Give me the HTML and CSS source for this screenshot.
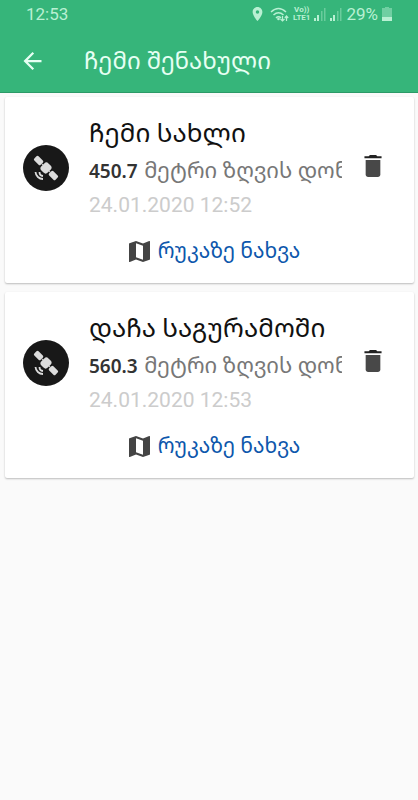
FILE: index.html
```html
<!DOCTYPE html>
<html lang="ka">
<head>
    <meta charset="UTF-8">
    <meta name="viewport" content="width=device-width, initial-scale=1.0">
    <title>ჩემი შენახული</title>
    <link rel="stylesheet" href="styles.css">
</head>
<body>
    <svg class="sprite" aria-hidden="true">
        <symbol id="satellite" viewBox="0 0 46 46">
            <circle cx="23" cy="23" r="23" fill="#181818"/>
            <g fill="#dcdcdc" transform="rotate(45 23 23)">
                <rect x="8" y="20" width="9" height="6" rx="1.500"/>
                <rect x="17" y="22.500" width="12" height="1"/>
                <rect x="18.500" y="18" width="9" height="10" rx="3"/>
                <rect x="29" y="20" width="9" height="6" rx="1.500"/>
            </g>
            <g fill="none" stroke="#dcdcdc" stroke-width="1.800">
                <path d="M16.500 27a4 4 0 0 0 3.500 4"/>
                <path d="M12.500 27a7.500 7.500 0 0 0 7.500 7"/>
            </g>
        </symbol>
        <symbol id="trash" viewBox="5 3 14 18">
            <path fill="#484848" d="M6 19c0 1.100.9 2 2 2h8c1.100 0 2-.9 2-2V7H6z"/>
            <path fill="#222" d="M19 4h-3.500l-1-1h-5l-1 1H5v1.600h14z"/>
        </symbol>
        <symbol id="map" viewBox="3 3 18 18">
            <path fill="#444" d="M20.500 3l-.16.03L15 5.100 9 3 3.360 4.900c-.21.070-.36.250-.36.480V20.500c0 .28.220.5.500.5l.16-.03L9 18.900l6 2.100 5.640-1.900c.21-.07.360-.25.360-.48V3.500c0-.28-.22-.5-.5-.5zM15 19l-6-2.110V5l6 2.110V19z"/>
        </symbol>
    </svg>

    <header class="header">
        <div class="status">
            <span class="clock">12:53</span>
            <div class="status-icons">
                <svg class="pin" viewBox="5 2 14 20" aria-hidden="true"><path fill="currentColor" d="M12 2C8.130 2 5 5.130 5 9c0 5.250 7 13 7 13s7-7.750 7-13c0-3.870-3.130-7-7-7zm0 9.500a2.500 2.500 0 0 1 0-5 2.500 2.500 0 0 1 0 5z"/></svg>
                <svg class="wifi" viewBox="0 0 19 15" aria-hidden="true">
                    <g fill="none" stroke="currentColor" stroke-width="1.500">
                        <path d="M1 5q7.500-7 15 0M3.500 8q5-4.500 10 0M6 11q2.500-2.500 5 0"/>
                        <path stroke-width="1.200" d="M12.500 9v5M10.500 12l2 2 2-2M16.500 14V9M14.800 11l1.700-2 1.700 2"/>
                    </g>
                    <circle cx="8.500" cy="12" r="1.300" fill="currentColor"/>
                </svg>
                <span class="lte">Vo))<br>LTE1</span>
                <svg class="signal" viewBox="0 0 12 13" aria-hidden="true"><path fill="currentColor" d="M0 10h2v3H0zM3 7h2v6H3z"/><path fill="currentColor" opacity=".4" d="M7 3h1.500v10H7zM10 0h1.500v13H10z"/></svg>
                <svg class="signal" viewBox="0 0 12 13" aria-hidden="true"><path fill="currentColor" d="M0 10h2v3H0zM3 7h2v6H3z"/><path fill="currentColor" opacity=".4" d="M7 3h1.500v10H7zM10 0h1.500v13H10z"/></svg>
                <span class="percent">29%</span>
                <svg class="battery" viewBox="0 0 10 14" aria-hidden="true"><path fill="currentColor" opacity=".45" d="M3 0h4v1h3v9H0V1h3z"/><path fill="currentColor" d="M0 10h10v4H0z"/></svg>
            </div>
        </div>
        <div class="bar">
            <button class="icon-button" aria-label="უკან">
                <svg class="back" viewBox="4 4 16 16"><path fill="currentColor" d="M20 11H7.830l5.590-5.590L12 4l-8 8 8 8 1.410-1.410L7.830 13H20z"/></svg>
            </button>
            <h1 class="title">ჩემი შენახული</h1>
        </div>
    </header>

    <main class="list">
        <article class="card">
            <div class="row">
                <svg class="avatar" aria-hidden="true"><use href="#satellite"/></svg>
                <div class="info">
                    <h2 class="name">ჩემი სახლი</h2>
                    <p class="height"><b>450.7</b> მეტრი ზღვის დონ</p>
                    <p class="date">24.01.2020 12:52</p>
                </div>
                <button class="icon-button delete" aria-label="წაშლა"><svg class="trash"><use href="#trash"/></svg></button>
            </div>
            <a class="map-link" href="#"><svg class="map" aria-hidden="true"><use href="#map"/></svg>რუკაზე ნახვა</a>
        </article>
        <article class="card">
            <div class="row">
                <svg class="avatar" aria-hidden="true"><use href="#satellite"/></svg>
                <div class="info">
                    <h2 class="name">დაჩა საგურამოში</h2>
                    <p class="height"><b>560.3</b> მეტრი ზღვის დონ</p>
                    <p class="date">24.01.2020 12:53</p>
                </div>
                <button class="icon-button delete" aria-label="წაშლა"><svg class="trash"><use href="#trash"/></svg></button>
            </div>
            <a class="map-link" href="#"><svg class="map" aria-hidden="true"><use href="#map"/></svg>რუკაზე ნახვა</a>
        </article>
    </main>
</body>
</html>
```

FILE: styles.css
```css
* {
    box-sizing: border-box;
}
body {
    margin: 0;
    background-color: #fafafa;
    font-family: Roboto, "Noto Sans Georgian", "Noto Sans", "DejaVu Sans", sans-serif;
}
h1, h2, p {
    margin: 0;
    font-weight: normal;
}
svg {
    display: block;
    flex-shrink: 0;
}
.sprite {
    position: absolute;
    width: 0;
    height: 0;
}
.header {
    background-color: #36b57a;
    border-bottom: 1px solid #2b9a67;
    color: #e6fff3;
}
.status {
    display: flex;
    justify-content: space-between;
    align-items: center;
    height: 28px;
    padding: 0 26px;
    color: #b9f0d3;
}
.clock, .percent {
    font-size: 17px;
}
.status-icons {
    display: flex;
    align-items: center;
    gap: 4px;
}
.pin {
    width: 11px;
    height: 14px;
    margin-right: 3px;
}
.wifi {
    width: 19px;
    height: 15px;
}
.lte {
    font-size: 8px;
    font-weight: bold;
    line-height: 8px;
    text-align: center;
}
.signal {
    width: 12px;
    height: 13px;
}
.battery {
    width: 10px;
    height: 14px;
}
.bar {
    display: flex;
    align-items: center;
    gap: 42px;
    height: 64px;
    padding: 2px 23px 0;
}
.icon-button {
    padding: 0;
    border: none;
    background-color: transparent;
    color: inherit;
    cursor: pointer;
}
.back {
    width: 19px;
    height: 18px;
}
.title {
    font-size: 24px;
    line-height: 32px;
}
.list {
    display: flex;
    flex-direction: column;
    gap: 9px;
    padding: 4px 4px 4px 5px;
}
.card {
    padding: 16px 32px 16px 18px;
    background-color: white;
    border-radius: 2px;
    box-shadow: 0 1px 2px rgba(0, 0, 0, .25);
}
.row {
    display: flex;
    align-items: center;
    gap: 20px;
}
.avatar {
    width: 46px;
    height: 46px;
}
.info {
    flex: 1;
    min-width: 0;
}
.name {
    font-size: 26px;
    line-height: 41px;
    color: #111;
}
.height {
    overflow: hidden;
    font-size: 22px;
    line-height: 34px;
    white-space: nowrap;
    color: #777;
}
.height b {
    margin-right: 1px;
    font-family: "Noto Sans", sans-serif;
    font-size: 19px;
    font-weight: 600;
    color: #333;
}
.date {
    font-size: 21px;
    line-height: 34px;
    color: #ccc;
}
.delete {
    padding: 0 0 4px 2px;
}
.trash {
    width: 18px;
    height: 22px;
}
.map-link {
    display: flex;
    justify-content: center;
    align-items: center;
    gap: 8px;
    margin-top: 13px;
    padding-left: 24px;
    font-size: 21px;
    line-height: 32px;
    text-decoration: none;
    color: #0d57ac;
}
.map {
    width: 21px;
    height: 21px;
}
```
